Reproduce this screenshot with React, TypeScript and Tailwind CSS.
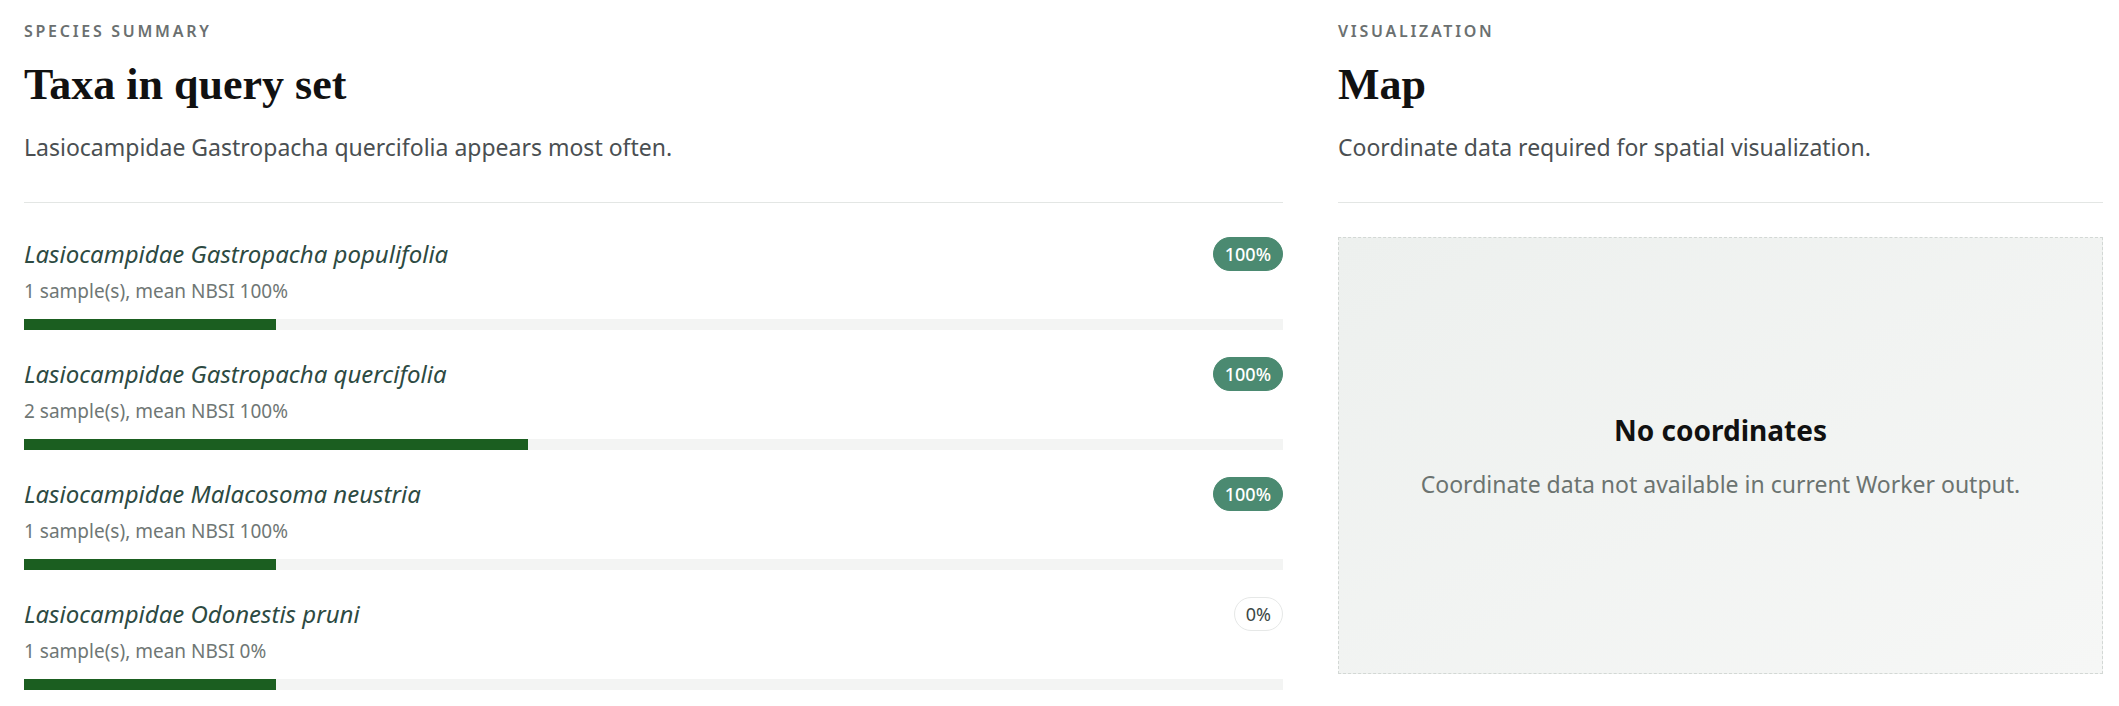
import React from "react";

type Taxon = {
  name: string;
  samples: number;
  nbsi: number;
};

const TAXA: Taxon[] = [
  { name: "Lasiocampidae Gastropacha populifolia", samples: 1, nbsi: 100 },
  { name: "Lasiocampidae Gastropacha quercifolia", samples: 2, nbsi: 100 },
  { name: "Lasiocampidae Malacosoma neustria", samples: 1, nbsi: 100 },
  { name: "Lasiocampidae Odonestis pruni", samples: 1, nbsi: 0 },
];

const SANS = "font-['Noto_Sans',sans-serif]";

function SectionHead({ label, title, text }: { label: string; title: string; text: string }) {
  return (
    <div>
      <div className="pt-[21px] text-[16px] leading-5 font-semibold uppercase tracking-[0.17em] text-[#6b7070]">
        {label}
      </div>
      <h2 className="mt-[18px] font-['Liberation_Serif',serif] text-[44px] leading-[52px] font-bold text-[#111]">
        {title}
      </h2>
      <p className="mt-5 text-[23px] leading-8 text-[#4a4f52]">{text}</p>
      <div className="mt-[39px] border-t border-[#e3e6e4]" />
    </div>
  );
}

function TaxonRow({ taxon, total }: { taxon: Taxon; total: number }) {
  const share = (taxon.samples / total) * 100;
  const high = taxon.nbsi >= 50;

  return (
    <div>
      <div className="flex items-center justify-between">
        <span className="text-[24px] leading-[30px] italic text-[#2d4a42]">{taxon.name}</span>
        {high ? (
          <span className="h-[34px] flex items-center px-[11px] rounded-full border border-[#4b8a71] bg-[#4b8a71] text-[18px] font-medium text-white">
            {taxon.nbsi}%
          </span>
        ) : (
          <span className="h-[34px] flex items-center px-[11px] rounded-full border border-[#e6e8e7] bg-white text-[18px] text-[#3c4744]">
            {taxon.nbsi}%
          </span>
        )}
      </div>
      <div className="mt-[7px] text-[19px] leading-[26px] text-[#6f7775]">
        {taxon.samples} sample(s), mean NBSI {taxon.nbsi}%
      </div>
      <div className="mt-[15px] h-[11px] bg-[#f3f4f3]">
        <div className="h-full bg-[#1b5e20]" style={{ width: `${share}%` }} />
      </div>
    </div>
  );
}

export default function App() {
  const total = TAXA.reduce((sum, t) => sum + t.samples, 0);

  return (
    <div className={`${SANS} bg-white min-h-screen pl-6 pr-4`}>
      <div className="grid grid-cols-[1259px_765px] gap-x-[55px]">
        {/* --- Species summary --- */}
        <section>
          <SectionHead
            label="Species summary"
            title="Taxa in query set"
            text="Lasiocampidae Gastropacha quercifolia appears most often."
          />
          <div className="mt-[34px] flex flex-col gap-[27px]">
            {TAXA.map((t) => (
              <TaxonRow key={t.name} taxon={t} total={total} />
            ))}
          </div>
        </section>

        {/* --- Map --- */}
        <section>
          <SectionHead
            label="Visualization"
            title="Map"
            text="Coordinate data required for spatial visualization."
          />
          <div className="mt-[34px] h-[437px] border border-dashed border-[#d3d8d5] bg-gradient-to-br from-[#edf0ee] to-[#f6f7f6] flex flex-col items-center justify-center">
            <div className="text-[28px] leading-9 font-bold text-[#111]">No coordinates</div>
            <div className="mt-[21px] text-[23px] leading-[30px] text-[#6b7370]">
              Coordinate data not available in current Worker output.
            </div>
          </div>
        </section>
      </div>
    </div>
  );
}
